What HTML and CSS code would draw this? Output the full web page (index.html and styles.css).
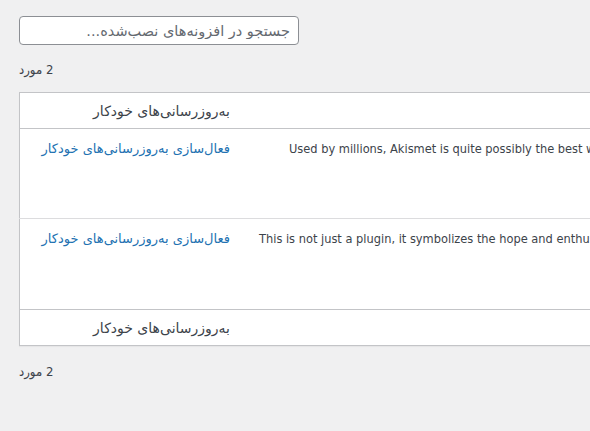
FILE: index.html
```html
<!DOCTYPE html>
<html lang="fa">
<head>
<meta charset="utf-8">
<title>افزونه‌ها</title>
<link rel="stylesheet" href="styles.css">
</head>
<body>
<div class="wrap">
  <div class="search-box">
    <input class="search-input" type="search" dir="rtl" placeholder="جستجو در افزونه‌های نصب‌شده...">
  </div>
  <div class="count" dir="rtl">2 مورد</div>
  <table class="plugins">
    <thead>
      <tr>
        <th class="col-auto" dir="rtl">به‌روزرسانی‌های خودکار</th>
        <th class="col-desc"></th>
      </tr>
    </thead>
    <tbody>
      <tr class="row-first">
        <td class="col-auto" dir="rtl"><a href="#" class="toggle">فعال‌سازی به‌روزرسانی‌های خودکار</a></td>
        <td class="col-desc"><p class="desc desc-short">Used by millions, Akismet is quite possibly the best way in the world to protect your blog from spam.</p></td>
      </tr>
      <tr class="row-next">
        <td class="col-auto" dir="rtl"><a href="#" class="toggle">فعال‌سازی به‌روزرسانی‌های خودکار</a></td>
        <td class="col-desc"><p class="desc">This is not just a plugin, it symbolizes the hope and enthusiasm of an entire generation.</p></td>
      </tr>
    </tbody>
    <tfoot>
      <tr>
        <th class="col-auto" dir="rtl">به‌روزرسانی‌های خودکار</th>
        <th class="col-desc"></th>
      </tr>
    </tfoot>
  </table>
  <div class="count count-bottom" dir="rtl">2 مورد</div>
</div>
</body>
</html>
```
FILE: styles.css
```css
html, body {
  margin: 0;
  padding: 0;
  background: #f0f0f1;
  overflow: hidden;
}
body {
  font-family: "DejaVu Sans", sans-serif;
  font-size: 13px;
  color: #3c434a;
}
.wrap {
  padding: 16px 0 0 19px;
  width: 1400px;
}
.search-box {
  display: flex;
}
.search-input {
  box-sizing: border-box;
  width: 280px;
  height: 29px;
  margin: 0;
  padding: 0 8px;
  border: 1px solid #8c8f94;
  border-radius: 4px;
  background: #fff;
  font-family: inherit;
  font-size: 14.5px;
  color: #2c3338;
  text-align: right;
}
.search-input::placeholder {
  color: #646970;
  opacity: 1;
}
.count {
  margin-top: 15px;
  height: 20px;
  line-height: 20px;
  text-align: left;
  width: 40px;
  font-family: "DejaVu Sans Condensed", "DejaVu Sans", sans-serif;
}
.count-bottom {
  margin-top: 16px;
}
.plugins {
  margin-top: 12px;
  width: 1200px;
  border-collapse: collapse;
  background: #fff;
  border: 1px solid #c3c4c7;
  box-shadow: 0 1px 1px rgba(0,0,0,0.04);
}
.plugins th,
.plugins td {
  padding: 0;
  vertical-align: top;
  font-weight: normal;
}
.plugins thead th {
  height: 35px;
  border-bottom: 1px solid #c3c4c7;
  vertical-align: middle;
}
.plugins tfoot th {
  height: 35px;
  border-top: 1px solid #c3c4c7;
  vertical-align: middle;
}
.plugins .row-next td {
  border-top: 1px solid #dcdcde;
  height: 90px;
}
.plugins .row-first td {
  height: 89px;
}
.plugins .col-auto {
  width: 210px;
  text-align: right;
  padding-right: 10px;
  font-size: 14px;
  color: #3c434a;
}
.toggle {
  display: inline-block;
  margin-top: 10px;
  line-height: 20px;
  font-size: 13px;
  color: #2271b1;
  text-decoration: none;
}
.desc {
  margin: 10px 0 0 19px;
  line-height: 20px;
  white-space: nowrap;
  font-family: "DejaVu Sans Condensed", "DejaVu Sans", sans-serif;
  font-size: 12.7px;
  color: #3c434a;
}
.desc-short {
  margin-left: 49px;
}
```
